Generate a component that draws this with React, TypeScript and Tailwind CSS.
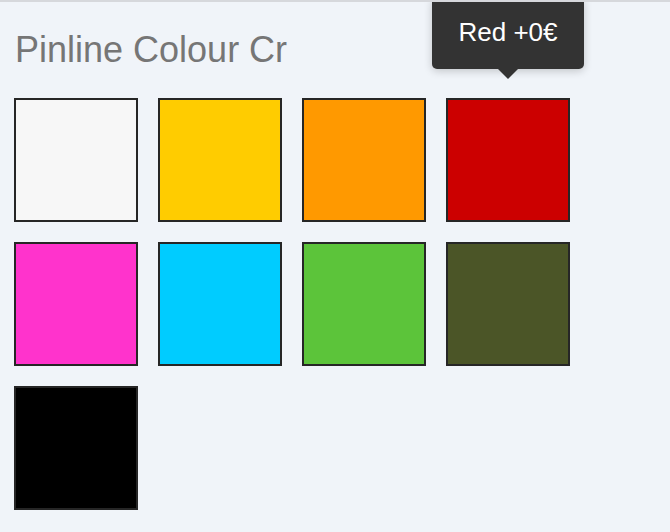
const swatches = [
  { name: 'White', color: 'bg-[#f7f7f7]' },
  { name: 'Yellow', color: 'bg-[#ffcc00]' },
  { name: 'Orange', color: 'bg-[#ff9900]' },
  { name: 'Red', color: 'bg-[#cc0000]' },
  { name: 'Pink', color: 'bg-[#ff33cc]' },
  { name: 'Cyan', color: 'bg-[#00ccff]' },
  { name: 'Green', color: 'bg-[#5cc43a]' },
  { name: 'Olive', color: 'bg-[#4b5527]' },
  { name: 'Black', color: 'bg-[#000000]' },
];

export default function App() {
  return (
    <div
      className="relative h-[532px] w-full overflow-hidden bg-[#f0f4f9] border-t-2 border-[#d6d8dc]"
      style={{ fontFamily: "'Liberation Sans', Arial, sans-serif" }}
    >
      <div className="px-[14px] pt-[28px]">
        <h1 className="ml-[1px] text-[36px] leading-[40px] text-[#767676]">Pinline Colour Cr</h1>
        <div className="mt-[28px] grid grid-cols-[repeat(4,124px)] gap-[20px]">
          {swatches.map((s) => (
            <button
              key={s.name}
              title={s.name}
              className={`h-[124px] w-[124px] border-2 border-[#262626] ${s.color}`}
            />
          ))}
        </div>
      </div>

      {/* Tooltip over the red swatch */}
      <div className="absolute left-[432px] top-[-4px] flex h-[71px] w-[152px] items-center justify-center rounded-[5px] bg-[#333333] pb-[3px] shadow-[0_2px_8px_rgba(0,0,0,0.2)]">
        <span className="text-[26px] leading-none text-white">Red +0€</span>
        <div className="absolute left-1/2 top-full h-0 w-0 -translate-x-1/2 border-x-[10px] border-t-[10px] border-x-transparent border-t-[#333333]" />
      </div>
    </div>
  );
}
